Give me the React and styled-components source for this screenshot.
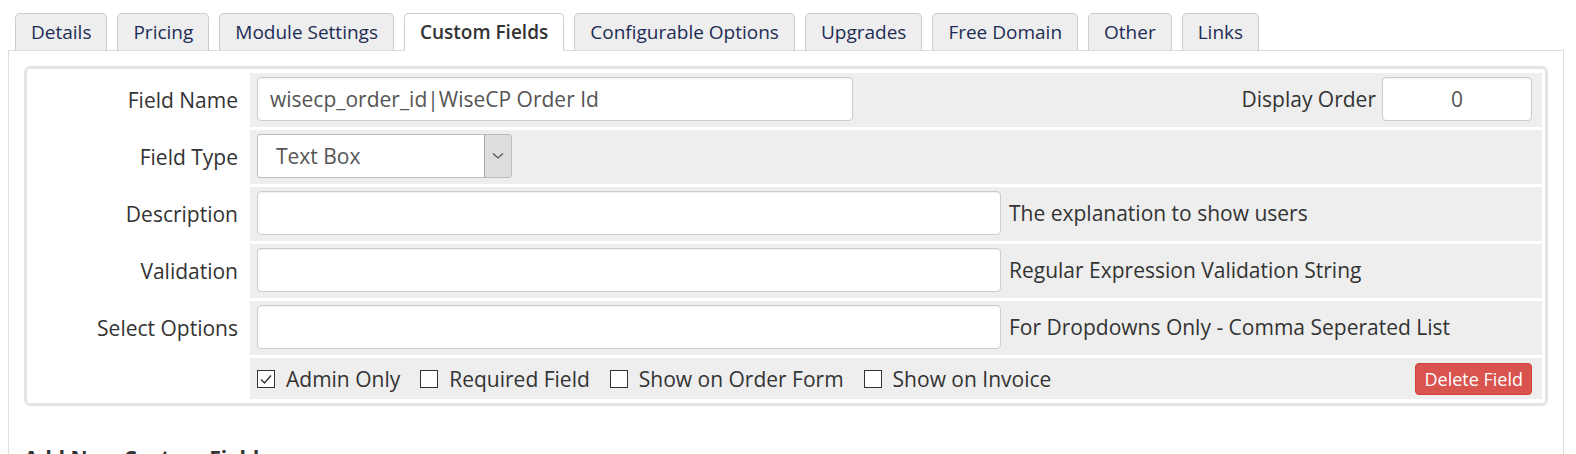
import styled, { createGlobalStyle } from 'styled-components';

const tabs = [
  'Details',
  'Pricing',
  'Module Settings',
  'Custom Fields',
  'Configurable Options',
  'Upgrades',
  'Free Domain',
  'Other',
  'Links',
];

const options = ['Admin Only', 'Required Field', 'Show on Order Form', 'Show on Invoice'];

export default function App() {
  return (
    <Page>
      <GlobalStyle />
      <TabBar>
        {tabs.map(t => (
          <Tab key={t} $active={t === 'Custom Fields'}>{t}</Tab>
        ))}
      </TabBar>
      <Panel>
        <FieldBox>
          <Label>Field Name</Label>
          <Cell>
            <TextInput $width="596px" defaultValue="wisecp_order_id|WiseCP Order Id" />
            <Spacer />
            <InlineLabel>Display Order</InlineLabel>
            <TextInput $width="150px" $center defaultValue="0" />
          </Cell>

          <Label>Field Type</Label>
          <Cell>
            <Select>
              <span>Text Box</span>
              <SelectArrow>
                <svg width="12" height="8" viewBox="0 0 12 8">
                  <path d="M1 1.5 L6 6 L11 1.5" fill="none" stroke="#555" strokeWidth="1.3" />
                </svg>
              </SelectArrow>
            </Select>
          </Cell>

          <Label>Description</Label>
          <Cell>
            <TextInput $width="744px" />
            <Help>The explanation to show users</Help>
          </Cell>

          <Label>Validation</Label>
          <Cell>
            <TextInput $width="744px" />
            <Help>Regular Expression Validation String</Help>
          </Cell>

          <Label>Select Options</Label>
          <Cell>
            <TextInput $width="744px" />
            <Help>For Dropdowns Only - Comma Seperated List</Help>
          </Cell>

          <Label />
          <CheckCell>
            {options.map(o => (
              <CheckItem key={o}>
                <CheckBox>
                  {o === 'Admin Only' && (
                    <svg width="14" height="12" viewBox="0 0 14 12">
                      <path d="M2 6.5 L5.5 10 L12 2.5" fill="none" stroke="#333" strokeWidth="1.4" />
                    </svg>
                  )}
                </CheckBox>
                {o}
              </CheckItem>
            ))}
            <Spacer />
            <DeleteButton>Delete Field</DeleteButton>
          </CheckCell>
        </FieldBox>
        <Heading>Add New Custom Field</Heading>
      </Panel>
    </Page>
  );
}

const GlobalStyle = createGlobalStyle`
  body {
    margin: 0;
    background: #fff;
    font-family: "Open Sans", "Liberation Sans", sans-serif;
    color: #333;
  }
`;

const Page = styled.div`
  padding: 13px 12px 0 8px;
  height: 454px;
  overflow: hidden;
  box-sizing: border-box;
`;

const TabBar = styled.div`
  display: flex;
  gap: 10px;
  padding-left: 7px;
  margin-bottom: -1px;
  position: relative;
  z-index: 1;
`;

const Tab = styled.div`
  height: 38px;
  box-sizing: border-box;
  padding: 0 15px;
  display: flex;
  align-items: center;
  font-size: 19px;
  border: 1px solid #ccc;
  border-bottom-color: ${p => (p.$active ? '#fff' : '#ddd')};
  border-radius: 5px 5px 0 0;
  background: ${p => (p.$active ? '#fff' : '#eee')};
  color: ${p => (p.$active ? '#333' : '#1d2c55')};
  font-weight: ${p => (p.$active ? 600 : 400)};
`;

const Panel = styled.div`
  border: 1px solid #ddd;
  background: #fff;
  padding: 15px;
  height: 600px;
`;

const FieldBox = styled.div`
  display: grid;
  grid-template-columns: 218px 1fr;
  column-gap: 2px;
  row-gap: 3px;
  border: 3px solid #e1e5e6;
  border-radius: 6px;
  padding: 4px 3px;
`;

const Label = styled.div`
  display: flex;
  align-items: center;
  justify-content: flex-end;
  padding-right: 10px;
  font-size: 21px;
`;

const Cell = styled.div`
  background: #eee;
  display: flex;
  align-items: center;
  padding: 4px 10px 6px 7px;
  font-size: 21px;
`;

const CheckCell = styled(Cell)`
  padding: 4px 10px 4px 7px;
  height: 41px;
  box-sizing: border-box;
`;

const Spacer = styled.div`
  flex: 1;
`;

const TextInput = styled.input`
  width: ${p => p.$width};
  height: 44px;
  box-sizing: border-box;
  border: 1px solid #ccc;
  border-radius: 4px;
  background: #fff;
  padding: 0 12px;
  font-family: inherit;
  font-size: 21px;
  color: #555;
  text-align: ${p => (p.$center ? 'center' : 'left')};
  box-shadow: inset 0 1px 1px rgba(0, 0, 0, 0.06);
`;

const InlineLabel = styled.span`
  margin-right: 6px;
`;

const Help = styled.span`
  margin-left: 8px;
`;

const Select = styled.div`
  width: 255px;
  height: 44px;
  box-sizing: border-box;
  border: 1px solid #bbb;
  border-radius: 3px;
  background: #fff;
  display: flex;
  align-items: center;
  padding-left: 18px;
  color: #555;
  overflow: hidden;
`;

const SelectArrow = styled.div`
  margin-left: auto;
  width: 26px;
  align-self: stretch;
  display: flex;
  align-items: center;
  justify-content: center;
  background: #ddd;
  border-left: 1px solid #aaa;
`;

const CheckItem = styled.label`
  display: flex;
  align-items: center;
  margin-right: 20px;
  white-space: nowrap;
`;

const CheckBox = styled.span`
  width: 18px;
  height: 18px;
  box-sizing: border-box;
  border: 1px solid #333;
  background: #fff;
  margin-right: 11px;
  display: flex;
  align-items: center;
  justify-content: center;
`;

const DeleteButton = styled.button`
  background: #d9534f;
  border: 1px solid #d43f3a;
  border-radius: 4px;
  color: #fff;
  font-family: inherit;
  font-size: 18px;
  height: 32px;
  padding: 0 8px;
  cursor: pointer;
`;

const Heading = styled.div`
  margin-top: 38px;
  font-size: 21px;
  font-weight: 700;
`;
